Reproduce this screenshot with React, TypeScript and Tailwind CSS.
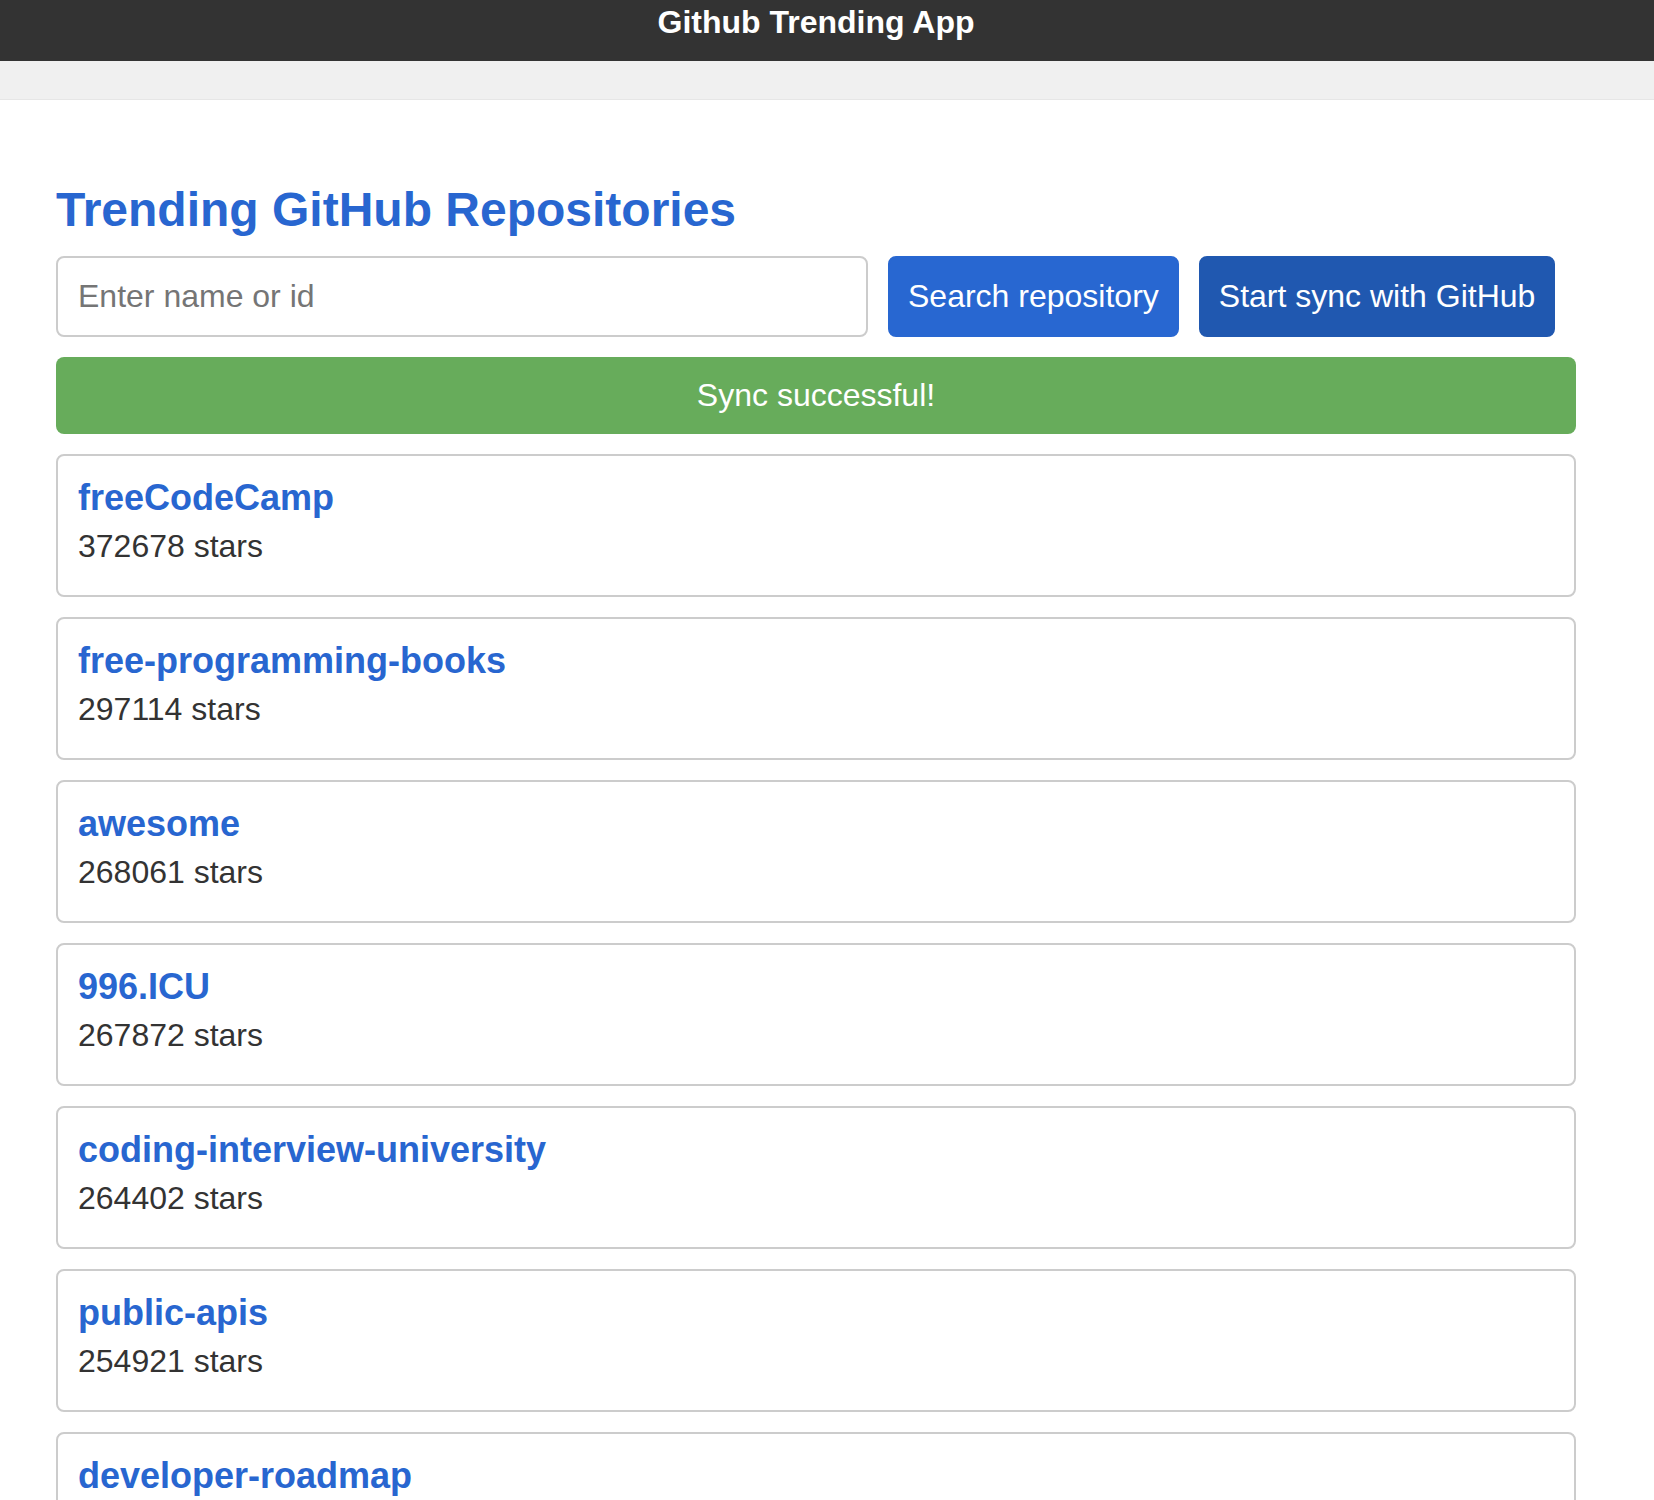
import React from "react";

const repos = [
  { name: "freeCodeCamp", stars: 372678 },
  { name: "free-programming-books", stars: 297114 },
  { name: "awesome", stars: 268061 },
  { name: "996.ICU", stars: 267872 },
  { name: "coding-interview-university", stars: 264402 },
  { name: "public-apis", stars: 254921 },
  { name: "developer-roadmap", stars: 250000 },
  { name: "react", stars: 200000 },
];

export default function App() {
  return (
    <div className="min-h-[1500px] bg-white text-[#333] font-['Liberation_Sans',Arial,sans-serif]">
      <header className="h-[61px] bg-[#333333] flex justify-center pr-[22px] pt-[4px]">
        <div className="text-[32px] leading-[normal] font-bold text-white">Github Trending App</div>
      </header>
      <nav className="h-[39px] bg-[#f0f0f0] border-b border-[#e6e6e6]" />
      <main className="ml-[56px] w-[1520px] pt-[82px]">
        <h2 className="text-[48px] leading-[normal] font-bold text-[#2866d0] mb-[19px]">
          Trending GitHub Repositories
        </h2>
        <div className="flex gap-[20px]">
          <input
            type="text"
            placeholder="Enter name or id"
            className="w-[812px] h-[81px] border-2 border-[#cccccc] rounded-[8px] px-[20px] text-[32px] text-[#333] placeholder:text-[#757575] outline-none"
          />
          <button className="h-[81px] px-[18px] border-2 border-[#2867d1] bg-[#2867d1] text-white text-[32px] leading-[normal] rounded-[8px]">
            Search repository
          </button>
          <button className="h-[81px] px-[18px] border-2 border-[#2058b0] bg-[#2058b0] text-white text-[32px] leading-[normal] rounded-[8px]">
            Start sync with GitHub
          </button>
        </div>
        <div className="mt-[20px] bg-[#67ac5b] rounded-[8px] py-[20px] text-center text-white text-[32px] leading-[normal]">
          Sync successful!
        </div>
        <div className="mt-[20px] flex flex-col gap-[20px]">
          {repos.map((r) => (
            <div key={r.name} className="h-[143px] border-2 border-[#cccccc] rounded-[8px] px-[20px] pt-[21px]">
              <h3 className="text-[36px] leading-[normal] font-bold text-[#2866d0] mb-[9px]">{r.name}</h3>
              <p className="text-[32px] leading-[normal] text-[#333]">{r.stars} stars</p>
            </div>
          ))}
        </div>
      </main>
    </div>
  );
}
